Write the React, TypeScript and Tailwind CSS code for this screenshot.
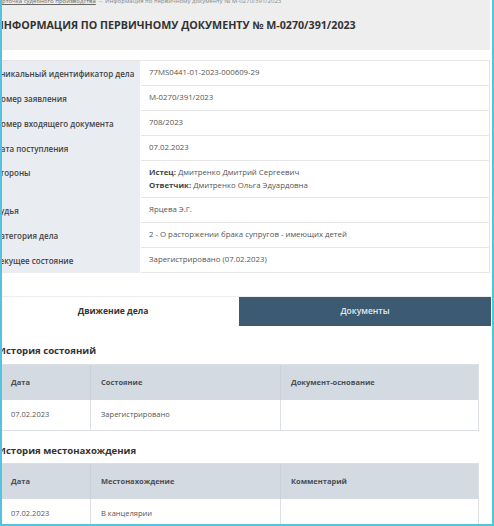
import React from "react";

const info: [string, React.ReactNode][] = [
  ["Уникальный идентификатор дела", "77MS0441-01-2023-000609-29"],
  ["Номер заявления", "М-0270/391/2023"],
  ["Номер входящего документа", "708/2023"],
  ["Дата поступления", "07.02.2023"],
  [
    "Стороны",
    <div className="leading-[13px]">
      <div>
        <span className="font-bold text-[#444]">Истец:</span> Дмитренко Дмитрий Сергеевич
      </div>
      <div>
        <span className="font-bold text-[#444]">Ответчик:</span> Дмитренко Ольга Эдуардовна
      </div>
    </div>,
  ],
  ["Судья", "Ярцева Э.Г."],
  ["Категория дела", "2 - О расторжении брака супругов - имеющих детей"],
  ["Текущее состояние", "Зарегистрировано (07.02.2023)"],
];

function HistoryTable({ cols, row }: { cols: string[]; row: string[] }) {
  return (
    <div className="ml-[13px] w-[479px] border border-[#dcdfe3]">
      <div className="grid grid-cols-[89px_190px_1fr] h-[35px] bg-[#d3dae2]">
        {cols.map((c, i) => (
          <div
            key={i}
            className={`flex items-center px-[10px] text-[7.5px] font-bold text-[#4a4f55] ${i > 0 ? "border-l border-[#c9d0d8]" : ""}`}
          >
            {c}
          </div>
        ))}
      </div>
      <div className="grid grid-cols-[89px_190px_1fr] h-[30px] bg-white">
        {row.map((c, i) => (
          <div
            key={i}
            className={`flex items-center px-[10px] text-[7.5px] text-[#555] ${i > 0 ? "border-l border-[#dcdfe3]" : ""}`}
          >
            {c}
          </div>
        ))}
      </div>
    </div>
  );
}

export default function App() {
  return (
    <div className="w-[494px] h-[526px] overflow-hidden border-l-2 border-r-2 border-b-2 border-[#55c3dd] bg-white font-['Open_Sans',sans-serif]">
      <div className="ml-[-15px] w-[503px]">
        <div className="flex flex-col h-[50px] bg-[#eeeeee] pl-[8px] overflow-hidden">
          <div className="mt-[-3px] h-[8px] text-[6px] leading-[8px] text-[#888] whitespace-nowrap">
            <span className="underline text-[#666]">Карточка судебного производства</span> → Информация по первичному документу № М-0270/391/2023
          </div>
          <h1 className="mt-[13px] text-[10.7px] leading-[14px] font-bold text-[#333] whitespace-nowrap">
            ИНФОРМАЦИЯ ПО ПЕРВИЧНОМУ ДОКУМЕНТУ № М-0270/391/2023
          </h1>
        </div>

        <div className="mt-[10px] border-t border-r border-[#e6e6e6]">
          {info.map(([label, value], i) => (
            <div key={i} className={`flex ${label === "Стороны" ? "h-[37px]" : "h-[25px]"}`}>
              <div
                className={`w-[153px] shrink-0 bg-[#e9edf2] pl-[8px] text-[8px] font-semibold text-[#444] whitespace-nowrap flex ${label === "Стороны" ? "items-start pt-[6px]" : "items-center"}`}
              >
                {label}
              </div>
              <div
                className={`ml-[1px] flex-1 border-b border-[#e6e6e6] pl-[8px] text-[7.8px] text-[#555] whitespace-nowrap flex ${label === "Стороны" ? "items-start pt-[5px]" : "items-center"}`}
              >
                {value}
              </div>
            </div>
          ))}
        </div>

        <div className="mt-[23px] flex h-[30px] w-[504px] border-t border-[#eeeeee]">
          <div className="w-[252px] flex items-center justify-center text-[8.5px] font-bold text-[#333]">
            Движение дела
          </div>
          <div className="flex-1 flex items-center justify-center bg-[#3c5a72] text-[8.5px] font-semibold text-[#e3e9ee]">
            Документы
          </div>
        </div>

        <h2 className="mt-[18px] pl-[11px] text-[9.6px] leading-[14px] font-bold text-[#333]">История состояний</h2>
        <div className="mt-[6px]">
          <HistoryTable cols={["Дата", "Состояние", "Документ-основание"]} row={["07.02.2023", "Зарегистрировано", ""]} />
        </div>

        <h2 className="mt-[13px] pl-[11px] text-[9.6px] leading-[14px] font-bold text-[#333]">История местонахождения</h2>
        <div className="mt-[5px]">
          <HistoryTable cols={["Дата", "Местонахождение", "Комментарий"]} row={["07.02.2023", "В канцелярии", ""]} />
        </div>
      </div>
    </div>
  );
}
